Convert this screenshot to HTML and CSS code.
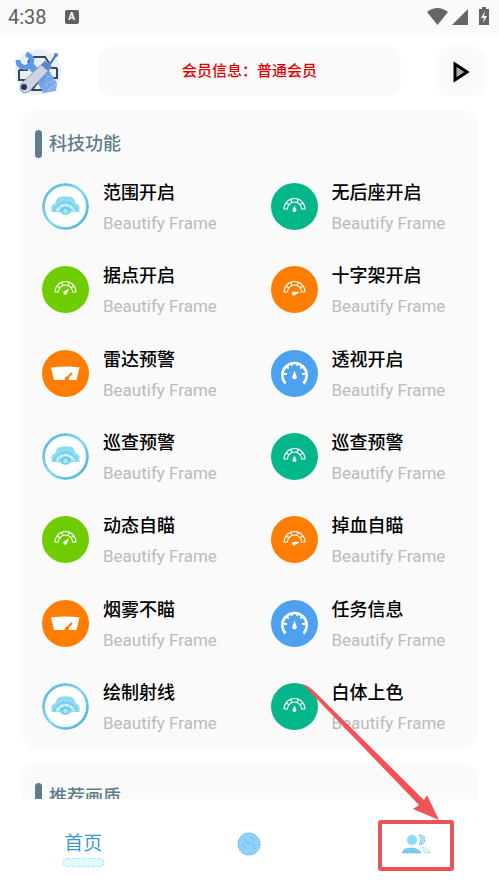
FILE: index.html
```html
<!DOCTYPE html>
<html lang="zh-CN">
<head>
  <meta charset="UTF-8">
  <meta name="viewport" content="width=device-width, initial-scale=1">
  <title>科技功能</title>
  <link rel="stylesheet" href="styles.css">
</head>

<body>
  <!-- shared icons -->
  <svg class="sprite" aria-hidden="true">
    <defs>
      <linearGradient id="ice" x1="0" y1="0" x2="1" y2="1">
        <stop offset="0" stop-color="#5bb8e0"/>
        <stop offset=".5" stop-color="#8fe4f8"/>
        <stop offset="1" stop-color="#4fa9da"/>
      </linearGradient>
      <linearGradient id="bolt" x1="0" y1="0" x2="1" y2="1">
        <stop offset="0" stop-color="#5d92dd"/>
        <stop offset="1" stop-color="#8db5ec"/>
      </linearGradient>
    </defs>
    <symbol id="arch" viewBox="0 0 47 47">
      <g fill="none" stroke="#fff" stroke-width="1.1">
        <path d="M13 26a10.500 10.500 0 0 1 21 0h-3.500a7 7 0 0 0-14 0z" stroke-linejoin="round"/>
        <path d="M15 19.500l3 2.500M19.500 16l1.500 3.500M27.500 16l-1.500 3.500M32 19.500l-3 2.500"/>
      </g>
    </symbol>
    <symbol id="gauge" viewBox="0 0 47 47">
      <use href="#arch"/>
      <path d="M23.500 22.500l1.800 4a1.900 1.900 0 1 1-3.600 0z" fill="#fff"/>
    </symbol>
    <symbol id="gauge-mid" viewBox="0 0 47 47">
      <use href="#arch"/>
      <path d="M27 22.500l-1.800 4.500a1.900 1.900 0 1 1-2.700-2z" fill="#fff"/>
    </symbol>
    <symbol id="gauge-low" viewBox="0 0 47 47">
      <use href="#arch"/>
      <path d="M29 26l-4.600 2.700a1.900 1.900 0 1 1-1-2.900z" fill="#fff"/>
    </symbol>
    <symbol id="panel" viewBox="0 0 47 47">
      <path d="M9 17.500q14.500-2 28.500 0l-3 12.500H12z" fill="#fff"/>
      <path d="M23 30l7-7" stroke="#ff7d00" stroke-width="2"/>
      <circle cx="25" cy="28.500" r="2" fill="#ff7d00"/>
    </symbol>
    <symbol id="dial" viewBox="0 0 47 47">
      <path d="M14.500 33.500a12.200 12.200 0 1 1 18 0" fill="none" stroke="#fff" stroke-width="2.600"/>
      <path d="M13 24h3M15.700 16.500l2 2M20 13l1 3M27 13l-1 3M31.300 16.500l-2 2M34 24h-3" stroke="#fff" stroke-width="1.800"/>
      <path d="M23.500 20.500l2 5.500a2.300 2.300 0 1 1-4 0z" fill="#fff"/>
    </symbol>
    <symbol id="radar" viewBox="0 0 47 47">
      <circle cx="23.500" cy="23.500" r="22" fill="#fff" stroke="url(#ice)" stroke-width="3"/>
      <circle cx="23.500" cy="23.500" r="22" fill="none" stroke="#3f9fce" stroke-width="1" stroke-dasharray="1 2"/>
      <path d="M9.500 29v-6q2-2 4-3 1-5 4-6 6-1.500 12 0 3 1 4 6 2 1 4 3v6h-8l-3 2.500h-6l-3-2.500z" fill="#8fdcf2"/>
      <g fill="none" stroke="#57b4dc">
        <path d="M12 28a12 12 0 0 1 23 0" stroke-dasharray="2 1"/>
        <path d="M18.500 28a5.500 5.500 0 0 1 10 0"/>
      </g>
      <path d="M15 28a9 9 0 0 1 17 0" fill="none" stroke="#eefcff" stroke-width="1.500" stroke-dasharray="4 1"/>
      <circle cx="23.500" cy="28" r="3" fill="#a5ebfb" stroke="#62bfe3"/>
    </symbol>
  </svg>

  <div class="status">
    <span class="time">4:38</span>
    <span class="badge">A</span>
    <svg class="signals" width="64" height="20" viewBox="0 0 64 20" fill="#666">
      <path d="M0 5Q10.500-3 21 5L10.500 18z"/>
      <path d="M41 2v16H25z"/>
      <path d="M55 0h4v2h3v16H52V2h3z"/>
      <path d="M58 4l-4 7h3l-1 5 4-7h-3z" fill="#fafafa"/>
    </svg>
  </div>

  <header class="header">
    <!-- crossed wrench and screwdriver -->
    <svg class="logo" viewBox="0 0 48 48">
      <circle cx="24" cy="24" r="23" fill="#e9eff9"/>
      <path d="M17 9h14l4 6M17 9l-3 6M5 22v10h7l-3 6M43 20v10h-7M5 22h9M33 20h10M18 42l6-8 8 8z" fill="none" stroke="#35465f" stroke-width="2"/>
      <path d="M42 7L34 19" stroke="#3c6db4" stroke-width="2"/>
      <circle cx="42" cy="7" r="2" fill="#4a82cc"/>
      <path d="M22 31l12-10 9 14-1 8-13 2z" fill="url(#bolt)"/>
      <path d="M30 32l8-6M32 37l9-6M34 42l8-6" stroke="#c5ddfb" stroke-width="1" stroke-dasharray="2 2"/>
      <g fill="none" stroke="#5b9ae6">
        <path d="M12 6q8 3 5 9t-8 4q-5-1-5-7" stroke-width="5"/>
        <path d="M16 17l14 15" stroke-width="7"/>
      </g>
      <path d="M31 13l7 6-20 21q-4 7-10 4-4-4 0-9z" fill="#cdd3e2" stroke="#8d9ab5"/>
      <path d="M31 13l7 6-4 4-7-6z" fill="#5687cf"/>
      <circle cx="10" cy="39" r="3" fill="#26344c"/>
    </svg>
    <p class="member">会员信息：普通会员</p>
    <button class="play" type="button" aria-label="启动">
      <svg width="20" height="22" viewBox="0 0 20 22"><path d="M4 3v16l12-8z" fill="#aaa" stroke="#000" stroke-width="3"/></svg>
    </button>
  </header>

  <main class="content">
    <section class="card">
      <h2 class="card-title">科技功能</h2>
      <div class="features">
        <a class="feature" href="#"><svg class="icon"><use href="#radar"/></svg><span class="label">范围开启<small>Beautify Frame</small></span></a>
        <a class="feature" href="#"><svg class="icon teal"><use href="#gauge"/></svg><span class="label">无后座开启<small>Beautify Frame</small></span></a>
        <a class="feature" href="#"><svg class="icon green"><use href="#gauge-mid"/></svg><span class="label">据点开启<small>Beautify Frame</small></span></a>
        <a class="feature" href="#"><svg class="icon orange"><use href="#gauge-low"/></svg><span class="label">十字架开启<small>Beautify Frame</small></span></a>
        <a class="feature" href="#"><svg class="icon orange"><use href="#panel"/></svg><span class="label">雷达预警<small>Beautify Frame</small></span></a>
        <a class="feature" href="#"><svg class="icon blue"><use href="#dial"/></svg><span class="label">透视开启<small>Beautify Frame</small></span></a>
        <a class="feature" href="#"><svg class="icon"><use href="#radar"/></svg><span class="label">巡查预警<small>Beautify Frame</small></span></a>
        <a class="feature" href="#"><svg class="icon teal"><use href="#gauge"/></svg><span class="label">巡查预警<small>Beautify Frame</small></span></a>
        <a class="feature" href="#"><svg class="icon green"><use href="#gauge-mid"/></svg><span class="label">动态自瞄<small>Beautify Frame</small></span></a>
        <a class="feature" href="#"><svg class="icon orange"><use href="#gauge-low"/></svg><span class="label">掉血自瞄<small>Beautify Frame</small></span></a>
        <a class="feature" href="#"><svg class="icon orange"><use href="#panel"/></svg><span class="label">烟雾不瞄<small>Beautify Frame</small></span></a>
        <a class="feature" href="#"><svg class="icon blue"><use href="#dial"/></svg><span class="label">任务信息<small>Beautify Frame</small></span></a>
        <a class="feature" href="#"><svg class="icon"><use href="#radar"/></svg><span class="label">绘制射线<small>Beautify Frame</small></span></a>
        <a class="feature" href="#"><svg class="icon teal"><use href="#gauge"/></svg><span class="label">白体上色<small>Beautify Frame</small></span></a>
      </div>
    </section>
    <section class="card">
      <h2 class="card-title">推荐画质</h2>
    </section>
  </main>

  <nav class="tabs">
    <a class="tab active" href="#">首页</a>
    <a class="tab" href="#" aria-label="发现">
      <svg width="26" height="26" viewBox="0 0 26 26">
        <circle cx="13" cy="13" r="11" fill="#8fd3fa" stroke="#56aee0" stroke-dasharray="2 1"/>
        <path d="M8 8l3 4 6 1 2 5M6 14l5 4M14 6l4 3" fill="none" stroke="#5bb3e8" stroke-dasharray="2 1"/>
      </svg>
    </a>
    <a class="tab" href="#" aria-label="我的">
      <svg width="30" height="24" viewBox="0 0 30 24">
        <circle cx="11" cy="8" r="5" fill="#8edaf8" stroke="#a9e2f7" stroke-dasharray="2 1"/>
        <path d="M18 3q6 0 6 5t-6 5q3-5 0-10z" fill="#a8e2f9" stroke="#4591c2" stroke-dasharray="1 2"/>
        <path d="M1 21q1-5 9-5t10 5z" fill="#78cdf5" stroke="#4da9d8" stroke-dasharray="1 2"/>
        <path d="M21 15q7 1 8 6h-6q0-4-2-6z" fill="#dff6fd" stroke="#6fb7dc" stroke-dasharray="1 2"/>
      </svg>
    </a>
    <svg class="pointer" width="200" height="210" viewBox="0 0 200 210" aria-hidden="true">
      <path class="arrow" d="M3 6Q9 7 16 14L125 122l3-5 12 25-26-11 6-4L14 17Q8 10 3 6z"/>
      <rect class="frame" x="81" y="144" width="72" height="47" rx="1"/>
    </svg>
  </nav>
</body>
</html>
```
FILE: styles.css
```css
*{
  box-sizing: border-box;
}
body{
  margin: 0;
  height: 100vh;
  display: flex;
  flex-direction: column;
  background-color: #fff;
  font-family: Roboto, "Noto Sans CJK SC", sans-serif;
  overflow: hidden;
}
a{
  color: inherit;
  text-decoration: none;
}
.sprite{
  position: absolute;
  width: 0;
  height: 0;
}
.status{
  display: flex;
  align-items: center;
  height: 33px;
  padding: 0 8px;
  background-color: #fafafa;
  color: #606060;
}
.time{
  font-size: 20px;
}
.badge{
  width: 14px;
  margin-left: 18px;
  border-radius: 2px;
  background-color: #606060;
  color: #fff;
  font-size: 10px;
  font-weight: 700;
  line-height: 14px;
  text-align: center;
}
.signals{
  margin-left: auto;
}
.header{
  display: flex;
  align-items: center;
  justify-content: space-between;
  gap: 36px;
  padding: 14px;
}
.logo{
  width: 48px;
  height: 48px;
}
.member{
  flex: 1;
  margin: 0;
  border-radius: 12px;
  background-color: #fafafa;
  color: #e00000;
  font-size: 15px;
  font-weight: 500;
  line-height: 49px;
  text-align: center;
}
.play{
  display: flex;
  align-items: center;
  justify-content: center;
  width: 48px;
  height: 49px;
  padding: 0;
  border: 0;
  border-radius: 12px;
  background-color: #fafafa;
}
.content{
  flex: 1;
  min-height: 0;
  padding: 0 21px;
  overflow: hidden;
}
.card{
  margin-bottom: 15px;
  padding-top: 19px;
  border-radius: 16px;
  background-color: #fafafa;
}
.card-title{
  display: flex;
  align-items: center;
  gap: 7px;
  margin: 0 14px;
  color: #607d8b;
  font-size: 18px;
  font-weight: 500;
  line-height: 30px;
}
.card-title::before{
  content: "";
  width: 7px;
  height: 28px;
  border-radius: 4px;
  background-color: #607d8b;
}
.features{
  display: grid;
  grid-template-columns: 1fr 1fr;
  grid-auto-rows: 1fr;
  min-height: 583px;
  margin-top: 6px;
}
.feature{
  display: flex;
  align-items: center;
  gap: 14px;
  padding-left: 21px;
}
.icon{
  width: 47px;
  height: 47px;
  border-radius: 50%;
}
.teal{
  background-color: #04b78a;
}
.green{
  background-color: #6fcc00;
}
.orange{
  background-color: #ff7d00;
}
.blue{
  background-color: #4da1ee;
}
.label{
  padding-top: 5px;
  color: #000;
  font-size: 18px;
  font-weight: 500;
  line-height: 28px;
}
.label small{
  display: block;
  color: #bbb;
  font-size: 17px;
  font-weight: 400;
  line-height: 32px;
}
.tabs{
  position: relative;
  display: grid;
  grid-template-columns: 1fr 1fr 1fr;
  place-items: center;
  height: 89px;
  background-color: #fff;
}
.tab{
  display: flex;
  flex-direction: column;
  align-items: center;
}
.active{
  padding-top: 10px;
  color: #3a9ad9;
  font-size: 19px;
  line-height: 28px;
}
.active::after{
  content: "";
  width: 39px;
  height: 7px;
  border: 1px dashed #a8e6fa;
  border-radius: 4px;
  background-color: #e0faff;
}
.pointer{
  position: absolute;
  right: 0;
  bottom: 0;
  pointer-events: none;
}
.arrow{
  fill: #f05455;
}
.frame{
  fill: none;
  stroke: #e85558;
  stroke-width: 4;
}
```
